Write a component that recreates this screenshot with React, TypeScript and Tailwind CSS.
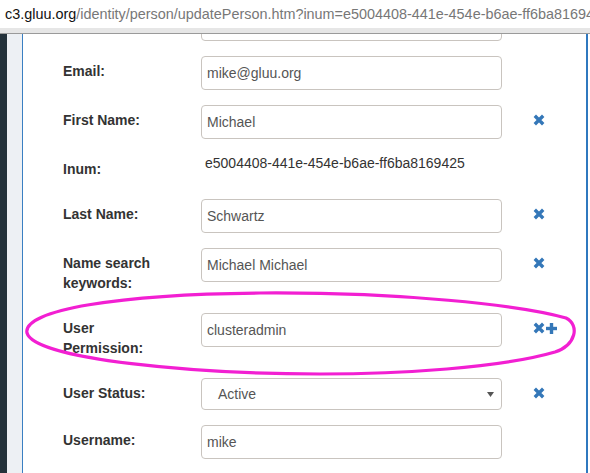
const BLUE = "#3477b8"

function RemoveIcon() {
  return (
    <svg width="12" height="12" viewBox="0 0 12 12" className="shrink-0">
      <path d="M1.8 1.8 L10.2 10.2 M10.2 1.8 L1.8 10.2" stroke={BLUE} strokeWidth="3.4" />
    </svg>
  )
}

function PlusIcon() {
  return (
    <svg width="11" height="11" viewBox="0 0 11 11" className="shrink-0">
      <rect x="0" y="3.8" width="11" height="3.4" fill={BLUE} />
      <rect x="3.8" y="0" width="3.4" height="11" fill={BLUE} />
    </svg>
  )
}

type Row = {
  label: string
  value?: string
  text?: string
  select?: boolean
  icons?: "x" | "xplus"
}

const rows: Row[] = [
  { label: "", value: "" },
  { label: "Email:", value: "mike@gluu.org" },
  { label: "First Name:", value: "Michael", icons: "x" },
  { label: "Inum:", text: "e5004408-441e-454e-b6ae-ff6ba8169425" },
  { label: "Last Name:", value: "Schwartz", icons: "x" },
  { label: "Name search keywords:", value: "Michael Michael", icons: "x" },
  { label: "User Permission:", value: "clusteradmin", icons: "xplus" },
  { label: "User Status:", select: true, value: "Active", icons: "x" },
  { label: "Username:", value: "mike" },
]

function FormRow({ row }: { row: Row }) {
  return (
    <div className="grid grid-cols-[138px_301px_1fr] items-start mb-[15px]">
      {/* label */}
      <div className="w-[100px] pt-[5px] pb-[5px] text-[14px] leading-[20px] font-bold text-[#333]">
        {row.label}
      </div>

      {/* control */}
      {row.text ? (
        <div className="pl-[4px] text-[14px] leading-[18px] text-[#333]">{row.text}</div>
      ) : row.select ? (
        <div className="h-[32px] rounded-[4px] border border-[#c9c4bf] bg-white flex items-center justify-between pl-[16px] pr-[7px] text-[14px] text-[#555]">
          <span>{row.value}</span>
          <svg width="7" height="5" viewBox="0 0 7 5">
            <path d="M0 0 L7 0 L3.5 5 Z" fill="#555" />
          </svg>
        </div>
      ) : (
        <div className="h-[34px] rounded-[4px] border border-[#c9c4bf] bg-white flex items-center px-[5px] text-[14px] text-[#555]">
          {row.value}
        </div>
      )}

      {/* icons */}
      <div className="flex items-center pl-[31px] pt-[9px]">
        {row.icons && <RemoveIcon />}
        {row.icons === "xplus" && (
          <div className="ml-[1px]">
            <PlusIcon />
          </div>
        )}
      </div>
    </div>
  )
}

export default function App() {
  return (
    <div
      className="relative w-[590px] h-[473px] overflow-hidden bg-white flex flex-col"
      style={{ fontFamily: '"Liberation Sans", Arial, sans-serif' }}
    >
      {/* url bar */}
      <div className="h-[28px] shrink-0 flex items-center pt-[2px] pl-[5px] whitespace-nowrap text-[14.4px] text-[#777]">
        <span className="text-[#111]">c3.gluu.org</span>
        <span>/identity/person/updatePerson.htm?inum=e5004408-441e-454e-b6ae-ff6ba8169425</span>
      </div>
      <div className="h-[5px] shrink-0 bg-[#e6e6e6]"></div>
      <div className="h-[1px] shrink-0 bg-[#9a9a9a]"></div>

      {/* page */}
      <div className="flex flex-1 min-h-0">
        <div className="w-[7px] bg-[#24323b]"></div>
        <div className="w-[15px] bg-[#edf0f4]"></div>

        {/* dialog panel */}
        <div className="w-[566px] border-l border-l-[#3a7fc2] border-r-2 border-r-[#2f78bf] overflow-hidden pl-[40px]">
          <div className="-mt-[27px]">
            {rows.map((r, i) => (
              <FormRow key={i} row={r} />
            ))}
          </div>
        </div>
        <div className="flex-1 bg-white"></div>
      </div>

      {/* hand-drawn highlight */}
      <svg className="absolute inset-0 pointer-events-none" width="590" height="473">
        <path
          d="M27,333 C22,310 120,294 260,293 C400,292 520,305 566,318 C580,325 576,345 555,352 C500,368 400,374 320,374 C200,374 35,360 27,333 Z"
          fill="none"
          stroke="#f21fd2"
          strokeWidth="3.2"
        />
      </svg>
    </div>
  )
}
